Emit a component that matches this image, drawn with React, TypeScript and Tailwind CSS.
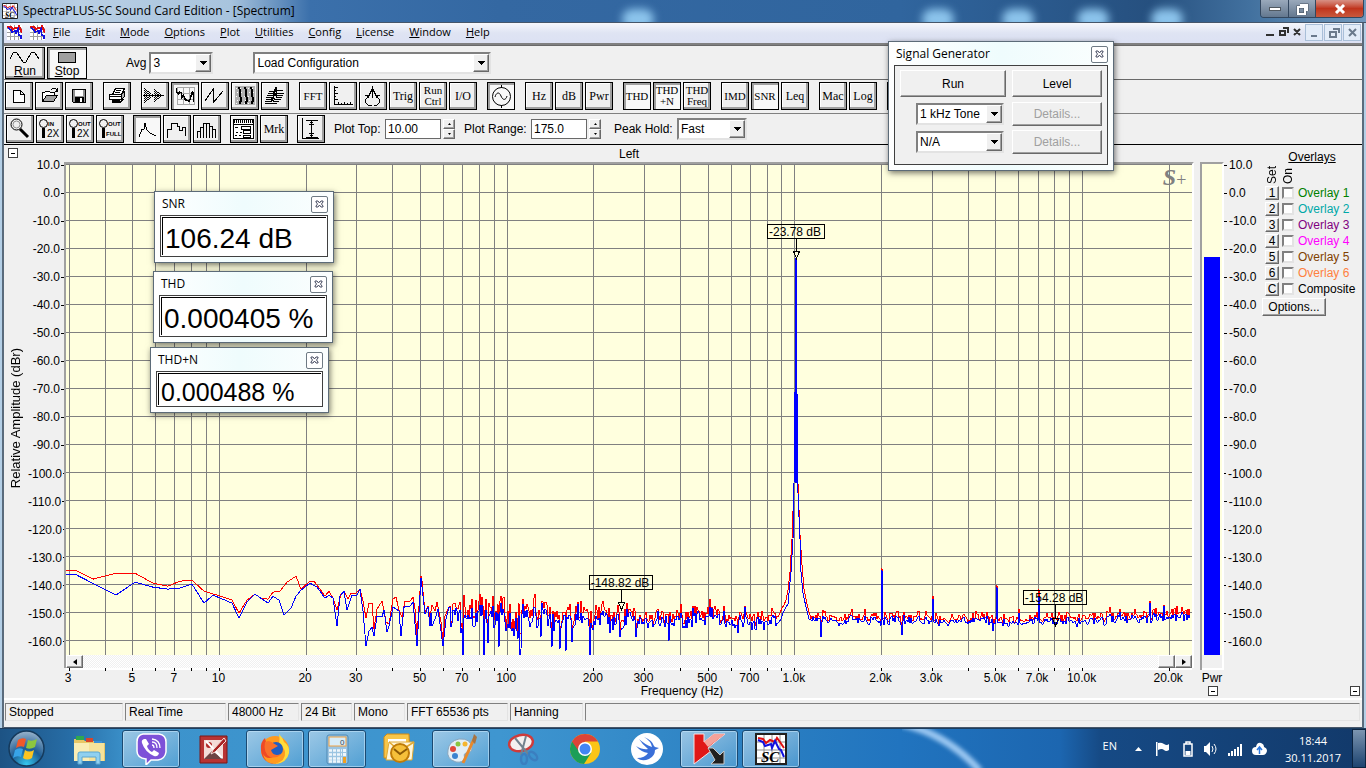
import React from 'react';

const PLOT_W = 1126;
const PLOT_H = 492;

const freqToX = (f: number) => 153.5 + 287.7 * (Math.log10(f) - 1);
const dbToY = (db: number) => 0.5 + (10 - db) * 2.807;
const pct = (v: number, total: number) => `${(v / total) * 100}%`;

const dbLevels = Array.from({ length: 18 }, (_, i) => 10 - i * 10);

const gridFreqs = [
  3, 4, 5, 6, 7, 8, 9, 10, 20, 30, 40, 50, 60, 70, 80, 90, 100, 200, 300, 400, 500, 600, 700, 800, 900,
  1000, 2000, 3000, 4000, 5000, 6000, 7000, 8000, 9000, 10000, 20000
];

const freqLabels: [number, string][] = [
  [3, '3'], [5, '5'], [7, '7'], [10, '10'], [20, '20'], [30, '30'], [50, '50'], [70, '70'],
  [100, '100'], [200, '200'], [300, '300'], [500, '500'], [700, '700'], [1000, '1.0k'],
  [2000, '2.0k'], [3000, '3.0k'], [5000, '5.0k'], [7000, '7.0k'], [10000, '10.0k'], [20000, '20.0k']
];

const lowRed =
  '0,407 9,407 27,416 50,410 69,410 87,420 102,423 114,418 126,417 138,428 151,432 166,437 173,450 181,437 189,431 195,435 202,436 207,429 214,428 221,419 230,413 235,426 244,418 248,418 254,426 259,433 263,428 267,435 271,447 275,431 278,428 282,436 285,430 290,430 294,426 297,438 300,455 303,440 306,440 308,466 311,446 316,438 318,447 320,459 323,461 327,436 330,434 333,447 336,454 339,438 344,438 347,434 349,446 351,473 355,413 356,418 359,449 362,443 364,454 366,442 369,448 371,439 375,459 377,478 379,453 383,444';

const lowBlue =
  '0,411 9,411 50,432 69,419 87,424 102,426 114,425 126,421 138,440 147,432 166,440 173,455 181,439 189,431 202,440 207,433 213,437 218,452 225,445 230,433 235,427 244,420 251,424 259,435 263,432 267,435 271,463 274,433 278,428 281,447 286,432 291,432 294,426 297,448 300,483 303,468 306,464 308,473 311,453 316,454 318,447 321,469 323,463 327,444 333,448 335,473 338,444 344,443 347,439 351,483 355,415 359,451 362,444 364,463 365,450 366,463 369,456 372,446 377,483 380,456 383,444';

const peakRed =
  '712,454 714,450 716,445 718,442 720,437 722,427 724,409 726,376 728,320 729,230 730,94 731,230 732,320 734,372 736,402 738,426 740,436 742,445 744,452';

const peakBlue =
  '712,460 715,456 717,450 720,444 722,441 723,430 725,409 727,376 728,320 729,230 730,94 731,230 732,330 734,376 735,409 737,430 740,444 743,456';

// harmonics and other narrow lines above the noise floor: x, blue y, red y
const spikes: [number, number, number][] = [
  [384, 444, 443], [398, 455, 432], [438, 450, 434], [453, 452, 440], [476, 440, 438], [512, 441, 439], [561, 446, 440],
  [627, 445, 443], [679, 444, 443], [816, 407, 405], [867, 436, 433], [931, 424, 422], [953, 450, 446], [973, 434, 426],
  [1084, 440, 438], [1098, 443, 442], [1111, 452, 443]
];

// the deepest nulls of the live trace
const nulls: [number, number][] = [
  [397, 500], [418, 495], [422, 480], [433, 484], [454, 492], [455, 486], [475, 474], [486, 484], [494, 486],
  [500, 488], [506, 479], [524, 500], [544, 470], [554, 474], [570, 474], [603, 478], [627, 476], [672, 470], [755, 474], [836, 472], [927, 468]
];

function buildTraces() {
  let seed = 4711;
  const rnd = () => {
    seed = (seed * 1103515245 + 12345) % 2147483648;
    return seed / 2147483648;
  };
  const noise = (from: number, to: number) => {
    const blue: string[] = [];
    const red: string[] = [];
    let drift = 0;
    for (let x = from; x <= to; x++) {
      const amp = x < 470 ? 15 : x < 540 ? 13 : x < 712 ? 9 : 5;
      const base = x < 540 ? 455 : x < 712 ? 457 : x < 1000 ? 458 : 458 - (x - 1000) / 30;
      drift = drift * 0.6 + (rnd() - 0.5) * amp;
      const swing = drift + (rnd() - 0.5) * amp * 1.2;
      const spike = spikes.find(s => s[0] === x);
      const deep = nulls.find(n => n[0] === x);
      const by = spike ? spike[1] : deep ? deep[1] : base + swing;
      const ry = spike ? spike[2] : deep ? Math.min(by - 4, 470) : by - 1 - rnd() * (amp * 0.7 + 2);
      blue.push(`${x},${Math.round(by)}`);
      red.push(`${x},${Math.round(ry)}`);
    }
    return { blue: blue.join(' '), red: red.join(' ') };
  };
  const a = noise(384, 711);
  const b = noise(745, 1124);
  return {
    red: `${lowRed} ${a.red} ${peakRed} ${b.red}`,
    blue: `${lowBlue} ${a.blue} ${peakBlue} ${b.blue}`
  };
}

const traces = buildTraces();

const raised = 'bg-[#f0f0f0] border border-t-white border-l-white border-b-[#696969] border-r-[#696969] shadow-[inset_-1px_-1px_0_#a0a0a0]';

/* ---------- small controls ---------- */

interface ComboProps {
  id: string;
  value: string;
  className: string;
}

const Combo: React.FC<ComboProps> = ({ id, value, className }) => (
  <div className={`relative h-[22px] border-2 border-t-[#808080] border-l-[#808080] border-b-[#e3e3e3] border-r-[#e3e3e3] bg-white ${className}`}>
    <select id={id} aria-label={id} defaultValue={value} className="block w-full h-full appearance-none bg-white pl-[2px] text-[12px] leading-4 outline-none">
      <option>{value}</option>
    </select>
    <span className={`pointer-events-none absolute right-0 top-0 bottom-0 w-4 flex items-center justify-center ${raised}`}>
      <svg width="7" height="4" shapeRendering="crispEdges"><path d="M0 0h7L3.5 4z" /></svg>
    </span>
  </div>
);

const Spinner = () => (
  <div className="flex flex-col w-3 ml-[2px]">
    {['M0 2h3L1.5 0z', 'M0 0h3L1.5 2z'].map((d, i) => (
      <button key={d} type="button" aria-label={i ? 'down' : 'up'} className={`h-[10px] flex items-center justify-center ${raised}`}>
        <svg width="3" height="2"><path d={d} /></svg>
      </button>
    ))}
  </div>
);

const CollapseBox = () => (
  <button type="button" aria-label="collapse" className="w-[10px] h-[10px] border border-[#404040] bg-white flex items-center justify-center">
    <span className="w-1 h-px bg-black" />
  </button>
);

interface ToolProps {
  name: string;
  pressed?: boolean;
  children: React.ReactNode;
}

const Tool: React.FC<ToolProps> = ({ name, pressed, children }) => (
  <button
    type="button"
    aria-label={name}
    className={`w-7 h-7 shrink-0 border border-black font-['Liberation_Serif',serif] text-[12px] leading-3 flex items-center justify-center text-center ${
      pressed
        ? 'bg-[#f8f8f8] shadow-[inset_2px_2px_0_#a0a0a0]'
        : 'bg-[#f0f0f0] shadow-[inset_-2px_-2px_0_#a0a0a0,inset_1px_1px_0_#ffffff]'
    }`}
  >
    {children}
  </button>
);

const Glyph = ({ children }: { children: React.ReactNode }) => (
  <svg width="26" height="26" viewBox="0 0 26 26" fill="none" stroke="#000" strokeWidth="1" shapeRendering="crispEdges">
    {children}
  </svg>
);

const ZoomGlyph = ({ top, bottom }: { top: string; bottom: string }) => (
  <svg width="26" height="26" viewBox="0 0 26 26" fill="none" stroke="#000">
    <circle cx="6.500" cy="7.500" r="4" />
    <path d="M6.500 12v10" strokeWidth="3" />
    <g fill="#000" stroke="none" fontFamily="Liberation Sans, sans-serif">
      <text x="11" y="10" fontSize="6" fontWeight="bold">{top}</text>
      {bottom === 'FULL'
        ? <text x="9" y="20" fontSize="6" fontWeight="bold">{bottom}</text>
        : <text x="10" y="21" fontSize="10">{bottom}</text>}
    </g>
  </svg>
);

const Caps = ({ children }: { children: React.ReactNode }) => <span className="text-[11px] leading-[11px]">{children}</span>;

/* ---------- tool bars ---------- */

const RunBar = () => (
  <div className="h-[34px] shrink-0 flex items-center border-t border-[#696969] bg-[#f0f0f0] pl-px">
    <button type="button" className="w-10 h-8 border border-black bg-[#f0f0f0] shadow-[inset_-2px_-2px_0_#a0a0a0] flex flex-col items-center justify-between">
      <svg width="32" height="15" fill="none" stroke="#000" shapeRendering="crispEdges">
        <path d="M1 11L4 5L6 4L8 5L14 14L16 15L17 14L22 5L24 4L26 5L30 11" />
      </svg>
      <span className="text-[12px] leading-[14px]"><u>R</u>un</span>
    </button>
    <button type="button" className="ml-[2px] w-10 h-8 border border-black bg-[#f8f8f8] shadow-[inset_2px_2px_0_#a0a0a0] flex flex-col items-center justify-end">
      <span className="w-[18px] h-[11px] border border-black bg-[#a0a0a0] mb-px" />
      <span className="text-[12px] leading-[14px]"><u>S</u>top</span>
    </button>
    <label htmlFor="Avg" className="ml-[39px] text-[12px]">Avg</label>
    <Combo id="Avg" value="3" className="ml-[3px] w-16" />
    <Combo id="Configuration" value="Load Configuration" className="ml-10 w-[238px]" />
  </div>
);

const MainBar = () => (
  <div className="h-[34px] flex items-start pt-[2px] border-t border-[#696969] bg-[#f0f0f0] pl-px gap-[10px] shrink-0 overflow-hidden">
    <div className="flex gap-[2px]">
      <Tool name="New"><Glyph><path d="M7.5 7.5h7l4 4v8h-11zM14.5 7.5v4h4" fill="#fff" /></Glyph></Tool>
      <Tool name="Open">
        <Glyph>
          <path d="M6.500 17.500v-8h2l1-1h4l1 1h4v3" fill="#fff" />
          <path d="M6.500 18.500l4-6h11l-4 6z" fill="#a0a0a0" />
          <path d="M14.500 7.500l2-2h3l2 3M19 8.500h3M21.500 5v4" />
        </Glyph>
      </Tool>
      <Tool name="Save">
        <Glyph>
          <path d="M6.500 6.500h13v13h-12l-1-1z" fill="#909090" />
          <path d="M9 7h8v6H9z" fill="#fff" stroke="none" />
          <path d="M9 14h9v5H9z" fill="#000" stroke="none" />
          <path d="M14 15h2v4h-2z" fill="#fff" stroke="none" />
        </Glyph>
      </Tool>
    </div>
    <Tool name="Print">
      <Glyph>
        <path d="M8.500 11.500l3-6h9l-3 6z" fill="#fff" />
        <path d="M12 7.500h5M11 9.500h5" />
        <path d="M5.500 11.500h12v5h-12z" fill="#fff" />
        <path d="M17.500 11.500l3-3v5l-3 3z" fill="#b0b0b0" />
        <path d="M5 13.500h12M8.500 17v2h8l3-3" />
        <path d="M8 17.500h8" strokeWidth="2" />
      </Glyph>
    </Tool>
    <div className="flex gap-[2px]">
      <Tool name="Time series">
        <Glyph>
          <path d="M2.500 5v15M4.500 7v11M6.500 8v9M8.500 10v5M10.500 11v3M12.500 6v13M14.500 8v9M16.500 9v7M18.500 11v3" strokeDasharray="1 1" />
          <path d="M3.500 6v13M5.500 8v9M7.500 9v7M13.500 7v11M15.500 9v7M17.500 10v5" strokeDasharray="1 1" />
          <path d="M1 12.500h21" />
        </Glyph>
      </Tool>
      <Tool name="Spectrum" pressed>
        <Glyph>
          <path d="M5 4.500h18M5 10.500h18M5 16.500h18M5 21.500h18M5.500 4v18M11.500 4v18M17.500 4v18M22.500 4v18" stroke="#a8a8a8" />
          <path d="M4.500 5v4l2 2 1-2 2 1v5l2-3 2 5 4 1 1-3 2-7 1 5v6" strokeWidth="1.500" />
        </Glyph>
      </Tool>
      <Tool name="Phase"><Glyph><path d="M3 18L11.500 5.500V19.500L21 8" /></Glyph></Tool>
      <Tool name="Spectrogram">
        <Glyph>
          <path d="M3 3h20v19H3z" fill="#b0b0b0" stroke="none" />
          <path d="M4 5.500h18M5 9.500h18M4 13.500h18M5 17.500h18M4 20.500h18" stroke="#fff" strokeDasharray="1 3" />
          <path d="M6.500 4l2 4-1 4 2 4-2 5M12.500 4l2 4-1 4 2 4-2 5M18.500 4l2 4-1 4 2 4-2 5" strokeWidth="2" />
        </Glyph>
      </Tool>
      <Tool name="3-D Surface">
        <Glyph>
          <path d="M7 8.500h5l2-4 1 3h6M6 10.500h5l3-3 1 3h7M5 12.500h6l2-2 2 2h6M4 14.500h7l2-3 2 3h5M4 16.500h5l2-2 2 2h6M3 18.500h6l1-2 2 2h5M3 20.500h12" />
        </Glyph>
      </Tool>
    </div>
    <div className="flex gap-[2px]">
      <Tool name="FFT"><Caps>FFT</Caps></Tool>
      <Tool name="Scaling">
        <Glyph><path d="M4.500 3v18.500H23M4 4.500h4M4 7.500h2M4 10.500h4M4 13.500h2M4 16.500h4M8.500 22v-3M11.500 22v-2M14.500 22v-3M17.500 22v-2M20.500 22v-3" /></Glyph>
      </Tool>
      <Tool name="Calibration">
        <Glyph>
          <path d="M12.500 3v3M12.500 6l-5 9M12.500 6l5 9M12.500 6v9" strokeWidth="1.500" />
          <path d="M5 12.500h5M15 12.500h5M7.500 14.500l-2 2v3l3 3h3M17.500 14.500l2 2v3l-3 3h-3" />
        </Glyph>
      </Tool>
      <Tool name="Trigger">Trig</Tool>
      <Tool name="Run Control"><Caps>Run<br />Ctrl</Caps></Tool>
      <Tool name="I/O">I/O</Tool>
    </div>
    <Tool name="Generator" pressed>
      <svg width="26" height="26" fill="none" stroke="#000">
        <circle cx="13.500" cy="13.500" r="9" />
        <path d="M13.500 2v3M13.500 22v3M7 14c1-4 4-6 6-1s5 4 6 0" />
      </svg>
    </Tool>
    <div className="flex gap-[2px]">
      <Tool name="Hz">Hz</Tool>
      <Tool name="dB">dB</Tool>
      <Tool name="Power">Pwr</Tool>
    </div>
    <div className="flex gap-[2px]">
      <Tool name="THD" pressed><Caps>THD</Caps></Tool>
      <Tool name="THD+N" pressed><Caps>THD<br />+N</Caps></Tool>
      <Tool name="THD Freq"><Caps>THD<br />Freq</Caps></Tool>
    </div>
    <div className="flex gap-[2px]">
      <Tool name="IMD"><Caps>IMD</Caps></Tool>
      <Tool name="SNR" pressed><Caps>SNR</Caps></Tool>
      <Tool name="Leq">Leq</Tool>
    </div>
    <div className="flex gap-[2px]">
      <Tool name="Macro">Mac</Tool>
      <Tool name="Log">Log</Tool>
    </div>
    <Tool name="Delay">{null}</Tool>
  </div>
);

const PlotBar = () => (
  <div className="h-8 flex items-center border-t border-[#808080] border-b border-b-black bg-[#f0f0f0] pl-[2px] shrink-0 text-[12px]">
    <div className="flex gap-[2px]">
      <Tool name="Zoom">
        <svg width="26" height="26" fill="none" stroke="#000">
          <circle cx="9.500" cy="8.500" r="5.500" /><circle cx="9.500" cy="8.500" r="3.500" stroke="#909090" />
          <path d="M13 13l8 8" strokeWidth="3" />
        </svg>
      </Tool>
      <Tool name="Zoom in"><ZoomGlyph top="IN" bottom="2X" /></Tool>
      <Tool name="Zoom out"><ZoomGlyph top="OUT" bottom="2X" /></Tool>
      <Tool name="Zoom full"><ZoomGlyph top="OUT" bottom="FULL" /></Tool>
    </div>
    <div className="flex gap-[2px] ml-[9px]">
      <Tool name="Line" pressed><Glyph><path d="M5 21l3-8h2l1-6 2 7 3 3 2 1 4 2" /></Glyph></Tool>
      <Tool name="Octave"><Glyph><path d="M3.500 22v-9h4v-6h6v3h2v4h3v-3h3v9" /></Glyph></Tool>
      <Tool name="Bars"><Glyph><path d="M3.500 22v-7h3v-4h3v-4h6v3h3v3h3v9M6.500 15v7M9.500 11v11M12.500 7v15M15.500 10v12M18.500 13v9" /></Glyph></Tool>
    </div>
    <div className="flex gap-[2px] ml-[9px]">
      <Tool name="Display options">
        <Glyph>
          <path d="M2.500 3.500h20v19h-20z" fill="#fff" />
          <path d="M3 5.500h19" strokeWidth="3" strokeDasharray="1 1" />
          <path d="M3 8.500h19M10.500 10.500h9v3h-9zM12.500 14.500h7v3h-7zM12.500 19.500h7v2h-7zM4 11.500h3M5 16.500h2M9 16.500h2M4 19.500h2M8 19.500h2" />
        </Glyph>
      </Tool>
      <Tool name="Marker">Mrk</Tool>
    </div>
    <div className="ml-[9px]">
      <Tool name="Autoscale">
        <Glyph><path d="M4.500 2v20.500h16M8 4.500h12M13.500 5v16M11 8.500h5M12 6.500h3M11 17.500h5M12 19.500h3M8 21.500h12" /></Glyph>
      </Tool>
    </div>
    <label htmlFor="top" className="ml-[9px] w-[51px] whitespace-nowrap">Plot Top:</label>
    <input id="top" type="text" defaultValue="10.00" className="w-14 h-5 border border-[#696969] bg-white px-[2px] outline-none" />
    <Spinner />
    <label htmlFor="range" className="ml-[9px] w-[67px] whitespace-nowrap">Plot Range:</label>
    <input id="range" type="text" defaultValue="175.0" className="w-14 h-5 border border-[#696969] bg-white px-[2px] outline-none" />
    <Spinner />
    <label htmlFor="Peak Hold" className="ml-[13px] w-[63px] whitespace-nowrap">Peak Hold:</label>
    <Combo id="Peak Hold" value="Fast" className="w-[70px]" />
  </div>
);

/* ---------- window chrome ---------- */

const AppIcon = ({ size, label }: { size: number; label?: boolean }) => (
  <svg width={size} height={size} viewBox="0 0 32 32">
    <path d="M1 1h30v30H1z" fill="#fff" stroke="#202020" strokeWidth="2" />
    <path d="M2 9h28M2 17h28M2 25h28M9 2v28M17 2v28M25 2v28" stroke="#909090" />
    <path d="M3 5l5 1 3 4 4-3 5 2 2-4 3 4 4 6" stroke="#e01010" strokeWidth="2" fill="none" />
    <path d="M3 7l5 2 2 4 6-2 1 4 3-7 4 8 2 1 3 7" stroke="#1010e0" strokeWidth="2" fill="none" />
    {label && <text x="6" y="29" fontSize="15" fontStyle="italic" fontWeight="bold" fontFamily="Liberation Serif, serif">SC</text>}
  </svg>
);

// the child windows carry the same icon without a frame
const ChildIcon = () => (
  <svg width="15" height="15" shapeRendering="crispEdges">
    <path d="M0 0h15v15H0z" fill="#fff" />
    <path d="M0 3.500h15M0 7.500h15M0 11.500h15M3.500 0v15M7.500 0v15M11.500 0v15" stroke="#a0a0a0" />
    <path d="M0 1.500h4l2 3 2-2 3 1 1-2 3 6" stroke="#e01010" strokeWidth="2" fill="none" />
    <path d="M1 3l3 2 1 2 3-1 1 2 2-4 1 6 2 1v3" stroke="#1010e0" strokeWidth="1.500" fill="none" />
  </svg>
);

const TitleBar = () => (
  <header className="relative h-[23px] shrink-0 flex items-center pl-[2px] border-b border-[#46566a] overflow-hidden bg-[linear-gradient(90deg,#9db9d6_0px,#b9cfe4_80px,#a8c4de_230px,#3b70ab_310px,#3468a2_500px,#30659e_900px,#26507f_1150px,#42719f_1250px,#7199bd_1366px)]">
    {[638, 938, 1018, 1093, 1167].map(x => (
      <span key={x} className="absolute top-[9px] w-8 h-5 rounded-full bg-[#8cc4ec] blur-[4px]" style={{ left: pct(x - 16, 1366) }} />
    ))}
    <AppIcon size={16} label />
    <h1 className="ml-[5px] font-['Open_Sans','Noto_Sans',sans-serif] text-[12px] text-black">SpectraPLUS-SC Sound Card Edition - [Spectrum]</h1>
    <div className="relative ml-auto self-start flex mr-[2px] h-[18px] rounded-b border border-t-0 border-[#33475f] overflow-hidden">
      <button type="button" aria-label="Minimize" className="w-7 flex items-center justify-center bg-gradient-to-b from-[#9aa9bb] to-[#64788f] border-r border-[#33475f]">
        <span className="w-3 h-1 bg-white border border-[#505860]" />
      </button>
      <button type="button" aria-label="Restore" className="w-[27px] flex items-center justify-center bg-gradient-to-b from-[#9aa9bb] to-[#64788f] border-r border-[#33475f]">
        <svg width="13" height="12" fill="none">
          <path d="M4 2h7v6M2 4h7v7H2z" stroke="#49535f" strokeWidth="3" />
          <path d="M4 2h7v6M2 4h7v7H2z" stroke="#fff" strokeWidth="2" />
        </svg>
      </button>
      <button type="button" aria-label="Close" className="w-[47px] flex items-center justify-center bg-gradient-to-b from-[#d79084] via-[#c0341c] to-[#c8583c]">
        <svg width="12" height="10" stroke="#fff" strokeWidth="3"><path d="M2 1l8 8M10 1l-8 8" /></svg>
      </button>
    </div>
  </header>
);

const menuItems = ['File', 'Edit', 'Mode', 'Options', 'Plot', 'Utilities', 'Config', 'License', 'Window', 'Help'];

const MenuBar = () => (
  <nav className="h-[22px] shrink-0 flex items-center border-b-2 border-[#808080] bg-gradient-to-b from-[#f6f7fc] via-[#dfe4f3] to-[#dce1f3] pl-[3px] pb-[2px] font-['Open_Sans','Noto_Sans',sans-serif] text-[11px]">
    <ChildIcon />
    <span className="ml-2"><ChildIcon /></span>
    <ul className="flex ml-2 gap-[15px] leading-4">
      {menuItems.map(m => (
        <li key={m}><button type="button"><u>{m[0]}</u>{m.slice(1)}</button></li>
      ))}
    </ul>
    <div className="ml-auto flex items-center h-full">
      <svg width="42" height="14" stroke="#303030" fill="none" strokeWidth="2">
        <path d="M3 10h8M20 3h5v5M17 6h5v4h-5zM31 4l6 6M37 4l-6 6" />
      </svg>
      {['M3 10h6', 'M6 3h6v4M3 6h6v5H3z', 'M3 3l7 7M10 3l-7 7'].map(d => (
        <button key={d} type="button" aria-label="mdi" className="w-[18px] h-[17px] border border-[#a9bfd8] bg-[#e3ecf8] flex items-center justify-center mr-px">
          <svg width="13" height="13" stroke="#6b7a8c" fill="none" strokeWidth="2"><path d={d} /></svg>
        </button>
      ))}
    </div>
  </nav>
);

interface FloatProps {
  title: string;
  className: string;
  children: React.ReactNode;
}

const FloatWindow: React.FC<FloatProps> = ({ title, className, children }) => (
  <section className={`absolute flex flex-col border border-[#5c6b78] bg-[linear-gradient(90deg,#ffffff,#effcfd_50%,#fbfefe)] px-[5px] pb-[5px] shadow-[1px_2px_6px_rgba(0,0,0,0.55)] ${className}`}>
    <div className="h-[23px] shrink-0 flex items-center justify-between pl-[2px]">
      <h2 className="font-['Open_Sans','Noto_Sans',sans-serif] text-[12px] leading-4">{title}</h2>
      <button type="button" aria-label={`Close ${title}`} className="w-[17px] h-[17px] mt-px rounded-[2px] border border-[#6e7a84] bg-white flex items-center justify-center">
        <svg width="9" height="8" viewBox="0 0 9 8"><path d="M1 1h2l1.500 2L6 1h2v1L6.500 4 8 6v1H6L4.500 5 3 7H1V6l1.500-2L1 2z" fill="#fff" stroke="#454a60" /></svg>
      </button>
    </div>
    {children}
  </section>
);

const Readout = ({ value, size }: { value: string; size: string }) => (
  <div className="flex-1 border border-[#404040] bg-white p-px">
    <div className={`h-full border-t border-l border-black pl-[2px] pt-[5px] flex items-center whitespace-nowrap leading-none ${size}`}>{value}</div>
  </div>
);

const SignalGenerator = () => (
  <FloatWindow title="Signal Generator" className="left-[888px] top-[41px] w-[226px] h-[130px]">
    <div className="flex-1 border border-[#404040] bg-[#f0f0f0] p-[5px] pt-1 grid grid-cols-[106px_90px] gap-x-[6px] content-start text-[12px]">
      <button type="button" className={`h-[27px] ${raised}`}>Run</button>
      <button type="button" className={`h-[27px] ${raised}`}>Level</button>
      <Combo id="Tone" value="1 kHz Tone" className="mt-[6px] ml-4 w-[88px]" />
      <button type="button" disabled className={`h-6 mt-[5px] text-[#a0a0a0] ${raised}`}>Details...</button>
      <Combo id="Second tone" value="N/A" className="mt-[5px] ml-4 w-[88px]" />
      <button type="button" disabled className={`h-6 mt-1 text-[#a0a0a0] ${raised}`}>Details...</button>
    </div>
  </FloatWindow>
);

/* ---------- spectrum view ---------- */

const markers = [
  { text: '-23.78 dB', x: 730, w: 58, y: 60, tip: 94 },
  { text: '-148.82 dB', x: 555, w: 64, y: 412, tip: 446 },
  { text: '-154.28 dB', x: 989, w: 64, y: 427, tip: 462 }
];

const SpectrumPlot = () => (
  <svg className="block w-full flex-1 min-h-0 bg-[#ffffde]" shapeRendering="crispEdges">
    <g stroke="#808080">
      {dbLevels.map(db => (
        <line key={db} x1="0" x2="100%" y1={pct(dbToY(db), PLOT_H)} y2={pct(dbToY(db), PLOT_H)} />
      ))}
      {gridFreqs.map(f => (
        <line key={f} y1="0" y2="100%" x1={pct(freqToX(f), PLOT_W)} x2={pct(freqToX(f), PLOT_W)} />
      ))}
    </g>
    <svg width="100%" height="100%" viewBox={`0 0 ${PLOT_W} ${PLOT_H}`} preserveAspectRatio="none" fill="none">
      <polyline points={traces.red} stroke="#ff0000" vectorEffect="non-scaling-stroke" />
      <polyline points={traces.blue} stroke="#0000ff" vectorEffect="non-scaling-stroke" />
      <path d="M730 94v226" stroke="#0000ff" strokeWidth="2" />
    </svg>
    {markers.map(m => (
      <svg key={m.text} x={pct(m.x, PLOT_W)} y={pct(m.y, PLOT_H)} overflow="visible">
        <rect x={-m.w / 2 + 0.5} y="0.5" width={m.w - 1} height="14" fill="none" stroke="#000" />
        <text x="-1" y="12" textAnchor="middle" fontSize="12" fontFamily="Liberation Sans, sans-serif">{m.text}</text>
        <path d={`M0.500 15v${m.tip - m.y - 22}M-2.500 ${m.tip - m.y - 6.5}h6l-3 7z`} fill="none" stroke="#000" />
      </svg>
    ))}
    <text x="97.400%" y="21" fontSize="24" fontWeight="bold" fontStyle="italic" fill="#808080" fontFamily="Liberation Serif, serif">S</text>
    <text x="98.600%" y="22" fontSize="18" fill="#808080" fontFamily="Liberation Serif, serif">+</text>
  </svg>
);

const ScrollBar = () => (
  <div className="h-[13px] shrink-0 flex bg-[repeating-conic-gradient(#ffffff_0_25%,#f0f0f0_0_50%)] bg-[length:2px_2px]">
    <button type="button" aria-label="Scroll left" className={`w-[17px] flex items-center justify-center ${raised}`}>
      <svg width="4" height="6"><path d="M4 0v6L0 3z" /></svg>
    </button>
    <span className={`ml-auto w-[17px] ${raised}`} />
    <button type="button" aria-label="Scroll right" className={`w-[17px] flex items-center justify-center ${raised}`}>
      <svg width="4" height="6"><path d="M0 0v6l4-3z" /></svg>
    </button>
  </div>
);

const FrequencyAxis = () => (
  <div className="h-[18px] shrink-0 px-[2px]">
    <svg className="block w-full h-full overflow-visible" shapeRendering="crispEdges">
      <rect width="100%" height="2" fill="#fff" />
      {gridFreqs.map(f => (
        <line key={f} x1={pct(freqToX(f), PLOT_W)} x2={pct(freqToX(f), PLOT_W)} y1="0" y2="3" stroke="#000" />
      ))}
      {freqLabels.map(([f, label]) => (
        <text key={f} x={pct(freqToX(f) - 1, PLOT_W)} y="14" textAnchor="middle" fontSize="12" fontFamily="Liberation Sans, sans-serif">{label}</text>
      ))}
    </svg>
  </div>
);

const LevelScale = ({ side }: { side: 'left' | 'right' }) => (
  <ol className="flex flex-1 flex-col justify-between pt-3 pb-9 text-[12px] leading-4">
    {dbLevels.map(db => (
      <li key={db} className={`flex items-center justify-end ${side === 'left' ? 'gap-px' : 'flex-row-reverse gap-[2px]'}`}>
        <span>{db.toFixed(1)}</span>
        <span className="w-[3px] h-px bg-black" />
      </li>
    ))}
  </ol>
);

const PowerMeter = () => (
  <div className="w-6 flex flex-col pt-[17px] text-[12px]">
    <div className="flex-1 min-h-0 border-2 border-b-0 border-t-[#a0a0a0] border-l-[#a0a0a0] border-r-white bg-[#ffffde] px-[2px] flex flex-col">
      <div className="h-[19%]" />
      <div className="flex-1 bg-[#0000ff]" />
    </div>
    <div className="h-[13px] border-l-2 border-r-2 border-l-[#a0a0a0] border-r-white bg-[#f0f0f0]" />
    <div className="h-[2px] border-l-2 border-[#a0a0a0] bg-white" />
    <div className="h-4 leading-4 text-center">Pwr</div>
  </div>
);

const overlays = [
  { key: '1', name: 'Overlay 1', color: 'text-[#008000]' },
  { key: '2', name: 'Overlay 2', color: 'text-[#00a8a8]' },
  { key: '3', name: 'Overlay 3', color: 'text-[#800080]' },
  { key: '4', name: 'Overlay 4', color: 'text-[#ff00ff]' },
  { key: '5', name: 'Overlay 5', color: 'text-[#804000]' },
  { key: '6', name: 'Overlay 6', color: 'text-[#ff8040]' },
  { key: 'C', name: 'Composite', color: 'text-black' }
];

const OverlayPanel = () => (
  <aside className="w-[100px] shrink-0 text-[12px] leading-4 pt-1">
    <h2 className="text-center underline">Overlays</h2>
    <div className="flex -mt-px h-[21px] items-end gap-0 pl-[2px] pb-px">
      <span className="w-4 [writing-mode:vertical-rl] rotate-180">Set</span>
      <span className="w-4 [writing-mode:vertical-rl] rotate-180">On</span>
    </div>
    {overlays.map(o => (
      <div key={o.key} className="h-4 flex items-center pl-[3px]">
        <button type="button" className={`w-[14px] h-[14px] leading-3 flex items-center justify-center ${raised}`}>{o.key}</button>
        <input id={`ov${o.key}`} type="checkbox" className="ml-[3px] w-3 h-3 appearance-none bg-white border-2 border-t-[#808080] border-l-[#808080] border-b-[#e3e3e3] border-r-[#e3e3e3]" />
        <label htmlFor={`ov${o.key}`} className={`ml-1 ${o.color}`}>{o.name}</label>
      </div>
    ))}
    <button type="button" className={`mt-px w-16 h-[18px] leading-4 ${raised}`}>Options...</button>
  </aside>
);

const SpectrumView = () => (
  <main className="flex-1 min-h-0 flex flex-col bg-[#f0f0f0] border-b-2 border-white">
    <div className="flex-1 min-h-0 flex">
      <div className="w-6 shrink-0 flex flex-col items-start pl-1 pt-[3px]">
        <CollapseBox />
        <div className="flex-1 flex items-center pb-2">
          <span className="[writing-mode:vertical-rl] rotate-180 text-[13px] leading-4 whitespace-nowrap">Relative Amplitude (dBr)</span>
        </div>
      </div>
      <div className="w-9 shrink-0 flex flex-col"><LevelScale side="left" /></div>
      <div className="flex-1 min-w-0 flex flex-col">
        <h2 className="h-[17px] shrink-0 text-center text-[12px] leading-[18px]">Left</h2>
        <div className="flex-1 min-h-0 flex flex-col border-2 border-b-0 border-t-[#a0a0a0] border-l-[#a0a0a0] border-r-white">
          <SpectrumPlot />
          <ScrollBar />
        </div>
        <FrequencyAxis />
      </div>
      <div className="flex ml-[6px]">
        <PowerMeter />
        <div className="w-[38px] flex flex-col"><LevelScale side="right" /></div>
      </div>
      <OverlayPanel />
    </div>
    <div className="h-3 shrink-0 flex text-[12px] leading-[10px]">
      <span className="flex-1" />
      <span>Frequency (Hz)</span>
      <span className="flex-1 flex justify-end gap-[132px] pr-[2px]"><CollapseBox /><CollapseBox /></span>
    </div>
  </main>
);

const statusCells = [
  { text: 'Stopped', w: 'w-[118px]' },
  { text: 'Real Time', w: 'w-[101px]' },
  { text: '48000 Hz', w: 'w-[71px]' },
  { text: '24 Bit', w: 'w-[51px]' },
  { text: 'Mono', w: 'w-[51px]' },
  { text: 'FFT 65536 pts', w: 'w-[101px]' },
  { text: 'Hanning', w: 'w-[73px]' },
  { text: '', w: 'flex-1' }
];

const StatusBar = () => (
  <footer className="h-7 shrink-0 flex gap-[2px] bg-[#f0f0f0] pt-[3px] pb-[6px] pl-px pr-[2px] border-b border-[#46566a] text-[12px]">
    {statusCells.map(c => (
      <span key={c.text} className={`${c.w} h-[18px] leading-4 pl-[3px] border border-t-[#808080] border-l-[#808080] border-b-[#e3e3e3] border-r-[#e3e3e3] whitespace-nowrap`}>{c.text}</span>
    ))}
  </footer>
);

/* ---------- task bar ---------- */

const taskIcons: { name: string; open?: boolean; art: React.ReactNode }[] = [
  {
    name: 'Explorer',
    art: (
      <>
        <path d="M1 6h9l2 2h10l2 2h8v18H1z" fill="#e8c766" />
        <path d="M3 3h8v4H3z" fill="#2fa84f" /><path d="M13 5h7v4h-7z" fill="#d8452a" /><path d="M21 8h8v3h-8z" fill="#3a8fd8" />
        <path d="M1 10h30v18H1z" fill="#f6e29a" /><path d="M1 10h15v18H1z" fill="#faedb5" />
        <path d="M5 31V21q0-2 2-2h18q2 0 2 2v10h-4v-7H9v7z" fill="#8fd0f0" stroke="#5aa6d0" />
      </>
    )
  },
  {
    name: 'Viber', open: true,
    art: (
      <>
        <path d="M8 1h16q7 1 7 8v10q-1 7-8 8h-7l-5 5v-6Q2 25 2 18V9q0-7 6-8z" fill="#7d51d8" stroke="#fff" strokeWidth="1.500" />
        <path d="M9 6q-3 1-2 4 3 9 12 13 4 1 5-3l-5-3-2 2q-4-2-5-6l2-2-3-5z" fill="#fff" />
        <path d="M17 6q8 1 8 9M17 9q5 0 5 6M17 12q2 0 2 3" fill="none" stroke="#fff" strokeWidth="1.300" />
      </>
    )
  },
  {
    name: 'Picture Manager',
    art: (
      <>
        <path d="M3 3h27v27H3z" fill="#b83434" stroke="#7d1717" />
        <path d="M7 7h19v19H7z" fill="#f3dcd8" />
        <circle cx="12" cy="12" r="3" fill="#b02828" />
        <path d="M7 26l8-8 3 2 8 6z" fill="#6d4444" /><path d="M9 8l16 17" stroke="#fff" strokeWidth="2" />
        <path d="M27 5L16 17l-2 4 4-2L29 8z" fill="#a82424" stroke="#f3dcd8" />
      </>
    )
  },
  {
    name: 'Firefox', open: true,
    art: (
      <>
        <circle cx="16" cy="17" r="14" fill="#ff9a1f" />
        <path d="M20 1q4 4 5 8 6 4 5 11-2 10-14 11 11-3 10-12-1-5-6-8 1-6 0-10z" fill="#ffdc3c" />
        <path d="M2 17Q1 9 6 5l1 4q4-1 6 1l5 3-6 4 4 6q-8 5-12-2 2 10 12 10Q3 30 2 17z" fill="#ef4a25" />
        <circle cx="17" cy="16" r="7" fill="#1f5ec4" />
        <path d="M6 9q5-2 8 1l5 3-7 4q2 7 10 4-4 5-11 3Q4 20 6 9z" fill="#f9702a" />
      </>
    )
  },
  {
    name: 'Calculator', open: true,
    art: (
      <>
        <rect x="6" y="2" width="21" height="29" rx="2" fill="#9cc5e2" stroke="#4d88b4" />
        <rect x="8" y="4" width="17" height="9" fill="#d8ecf8" stroke="#f0a040" /><text x="19" y="12" fontSize="8" fill="#345" fontFamily="Liberation Sans">0</text>
        <path d="M8 17.500h13M8 21.500h13M8 25.500h13M8 28.500h13" stroke="#eef6fb" strokeWidth="2.500" strokeDasharray="3 1" />
        <path d="M23.500 16v8" stroke="#eef6fb" strokeWidth="3" strokeDasharray="3 1" /><path d="M23.500 24v6" stroke="#f0a020" strokeWidth="3" />
      </>
    )
  },
  {
    name: 'Outlook',
    art: (
      <>
        <path d="M4 1h22l1 24H1V4z" fill="#f8c64a" stroke="#d28a10" /><path d="M5 6h18v8H5z" fill="#fff" />
        <path d="M6 9h25l-2 18H3z" fill="#fff6da" stroke="#e0a830" />
        <path d="M6 9l11 9L31 9" fill="none" stroke="#e0a830" strokeWidth="1.500" />
        <circle cx="17" cy="20" r="9" fill="#f6c03a" stroke="#c07c08" strokeWidth="2" />
        <path d="M11 16l6 5 7-5" fill="none" stroke="#8c5a06" strokeWidth="2" />
      </>
    )
  },
  {
    name: 'Paint', open: true,
    art: (
      <>
        <path d="M3 17Q4 8 14 6q12-1 13 9 0 5-6 5-3 1-1 5-2 5-9 4Q1 26 3 17z" fill="#e3eef6" stroke="#8aa6bc" />
        <circle cx="8" cy="16" r="3" fill="#e2473a" /><circle cx="13" cy="11" r="2.500" fill="#8bc53f" /><circle cx="20" cy="11" r="2.500" fill="#f5b52e" /><circle cx="10" cy="23" r="3" fill="#3b83cf" />
        <path d="M29 6L18 30" stroke="#e8892c" strokeWidth="3" /><path d="M27 8l2-7 3 3-2 7z" fill="#a87442" />
      </>
    )
  },
  {
    name: 'Snipping Tool',
    art: (
      <>
        <ellipse cx="14" cy="10" rx="12" ry="8" fill="#f4f0f0" stroke="#cf3b3b" strokeWidth="2.500" transform="rotate(-12 14 10)" />
        <path d="M8 5l14 17M19 3l-5 19" stroke="#74828e" strokeWidth="2" />
        <ellipse cx="17" cy="26" rx="3" ry="5" fill="none" stroke="#3b7fc0" strokeWidth="2.500" /><ellipse cx="26" cy="23" rx="3" ry="5" fill="none" stroke="#3b7fc0" strokeWidth="2.500" transform="rotate(-45 26 23)" />
      </>
    )
  },
  {
    name: 'Chrome',
    art: (
      <>
        <circle cx="16" cy="16" r="15" fill="#fbc516" />
        <path d="M3 8.500A15 15 0 0 0 15 31l7-11-6-4z" fill="#1b9e58" />
        <path d="M3 8.500A15 15 0 0 1 29 8.500H16l-6 10z" fill="#dc4437" />
        <circle cx="16" cy="16" r="7" fill="#fff" /><circle cx="16" cy="16" r="5.500" fill="#4285f4" />
      </>
    )
  },
  {
    name: 'Browser',
    art: (
      <>
        <circle cx="16" cy="16" r="16" fill="#fff" />
        <path d="M13 4q8 3 10 9l1 1 4 1-4 2q0 6-6 9-7 3-12-1 8 0 11-5-7-1-12-7 7 4 12 3Q11 11 8 6q5 5 13 8-1-6-8-10z" fill="#3a6fd8" />
      </>
    )
  },
  {
    name: 'Kaspersky', open: true,
    art: (
      <>
        <path d="M1 1h10v8L21 1h11L15 15l3 3L1 31z" fill="#e01818" stroke="#f8e0e0" /><path d="M11 9L21 1h11L15 14z" fill="#f5a29a" />
        <path d="M15 15h5l7 7 4-4v13H18l4-4z" fill="#202020" stroke="#c8c8c8" />
      </>
    )
  },
  { name: 'SpectraPLUS-SC', open: true, art: null }
];

const TaskBar = () => (
  <div className="relative h-10 shrink-0 flex items-center overflow-hidden border-t border-[#1d3d5e] text-white font-['Open_Sans','Noto_Sans',sans-serif] text-[11px] bg-[linear-gradient(90deg,#1d5384_0px,#276da6_70px,#3c93cc_130px,#3f96d0_500px,#2b80c2_750px,#2174bf_900px,#1c66b0_1060px,#164a85_1100px,#12396a_1366px)]">
    <svg className="absolute left-[66%] top-0" width="100" height="40" fill="none">
      <path d="M0 -5Q45 5 78 42" stroke="#9cc8f2" strokeWidth="7" className="blur-[2px]" />
    </svg>
    <button type="button" aria-label="Start" className="ml-2 mr-[15px]">
      <svg width="37" height="37" viewBox="0 0 37 37">
        <defs>
          <radialGradient id="orb" cx="50%" cy="95%" r="90%">
            <stop offset="0" stopColor="#35c8f0" /><stop offset="0.5" stopColor="#1c5c94" /><stop offset="1" stopColor="#8eabc6" />
          </radialGradient>
        </defs>
        <circle cx="18.500" cy="18.500" r="17.500" fill="url(#orb)" stroke="#153a5c" strokeWidth="1.500" />
        <path d="M10 10q4-3 8-1l-2 8q-4-2-8 1z" fill="#f0592a" /><path d="M20 10q4 2 9-1l-2 8q-5 3-9 1z" fill="#8cc63e" />
        <path d="M7 20q4-3 8-1l-2 8q-4-2-8 1z" fill="#38a4e8" /><path d="M17 20q4 3 9 0l-2 8q-5 3-9 0z" fill="#fcc420" />
      </svg>
    </button>
    <div className="flex gap-1 h-full pt-px">
      {taskIcons.map(t => (
        <button
          key={t.name}
          type="button"
          aria-label={t.name}
          className={`w-[58px] h-[38px] flex items-center justify-center rounded-[3px] ${
            t.open ? 'border border-[#1b4a72] bg-gradient-to-br from-[#b4d5ec]/80 to-[#5ba6d6]/60 shadow-[inset_0_0_0_1px_rgba(200,230,250,0.6)]' : ''
          }`}
        >
          {t.art ? <svg width="32" height="32" viewBox="0 0 32 32">{t.art}</svg> : <AppIcon size={32} label />}
        </button>
      ))}
    </div>
    <div className="relative ml-auto flex items-center h-full">
      <span className="mb-1 mr-[18px]">EN</span>
      <svg width="132" height="18" viewBox="0 0 132 18" fill="#fff">
        <path d="M0 11h7l-3.500-4z" />
        <path d="M21 2h1.500v14H21zM23 3q3-1 6 1t5 0v6q-3 2-5 0t-6 0z" />
        <path d="M49 4h8v12h-8zM51 2h4v2h-4z" fill="none" stroke="#fff" strokeWidth="1.500" /><path d="M50.500 11h5v4h-5z" />
        <path d="M69 6h2l4-4v14l-4-4h-2z" /><path d="M77 6q2 3 0 6M79 4q4 5 0 10" fill="none" stroke="#fff" />
        <path d="M93 13h2v3h-2zM96 11h2v5h-2zM99 9h2v7h-2zM102 7h2v9h-2zM105 4h2v12h-2z" />
        <path d="M121 15q-4 0-4-4t4-4q1-5 5-4 3 1 3 4 3 1 3 4-1 4-4 4z" />
        <path d="M124.500 14V8M122 10l2.500-3 2.500 3" stroke="#2a78e0" strokeWidth="1.500" fill="none" />
      </svg>
      <div className="w-[78px] ml-[7px] text-center leading-[17px]">
        <div>18:44</div>
        <div>30.11.2017</div>
      </div>
      <button type="button" aria-label="Show desktop" className="w-[14px] h-full border border-[#0c2440] bg-gradient-to-b from-[#7c95b0] to-[#1d4470]" />
    </div>
  </div>
);

export default function App() {
  return (
    <div className="relative h-screen w-full flex flex-col overflow-hidden bg-[#b4cfe6] text-black font-['Liberation_Sans',Arial,sans-serif]">
      <TitleBar />
      <div className="flex-1 min-h-0 flex flex-col mx-[2px] border-x-2 border-[#5a6b7c]">
        <MenuBar />
        <RunBar />
        <MainBar />
        <PlotBar />
        <SpectrumView />
        <StatusBar />
      </div>
      <TaskBar />
      <FloatWindow title="SNR" className="left-[154px] top-[191px] w-[180px] h-[72px]">
        <Readout value="106.24 dB" size="text-[28px]" />
      </FloatWindow>
      <FloatWindow title="THD" className="left-[153px] top-[271px] w-[180px] h-[72px]">
        <Readout value="0.000405 %" size="text-[28px]" />
      </FloatWindow>
      <FloatWindow title="THD+N" className="left-[150px] top-[347px] w-[179px] h-[66px]">
        <Readout value="0.000488 %" size="text-[25px]" />
      </FloatWindow>
      <SignalGenerator />
    </div>
  );
}
